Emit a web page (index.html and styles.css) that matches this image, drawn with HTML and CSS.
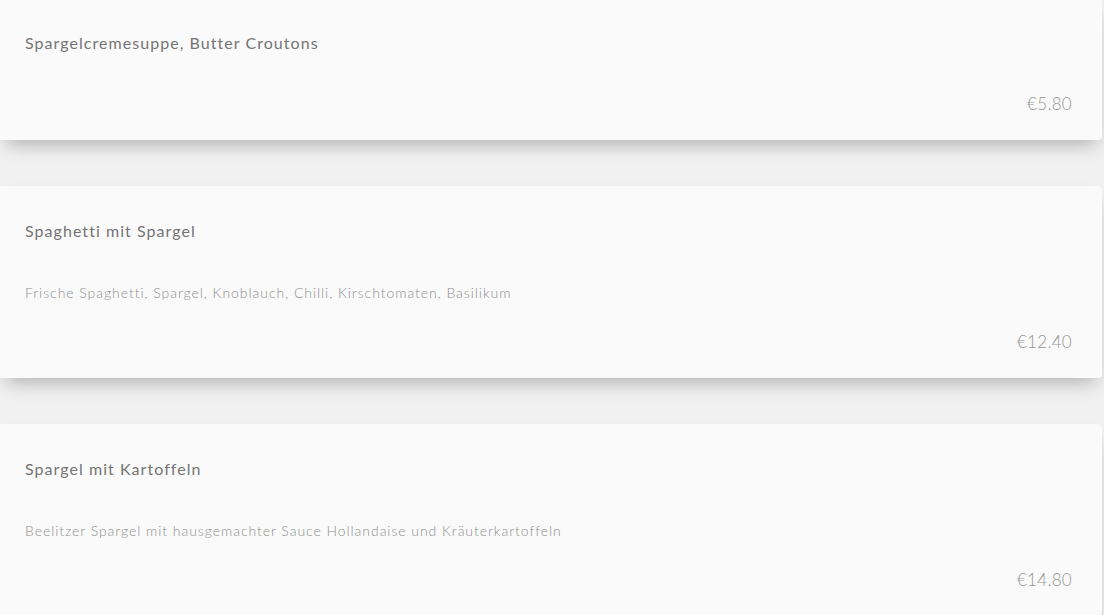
FILE: index.html
```html
<!DOCTYPE html>
<html lang="de">
<head>
    <meta charset="UTF-8">
    <meta name="viewport" content="width=device-width, initial-scale=1.0">
    <title>Speisekarte</title>
    <link rel="stylesheet" href="styles.css">
</head>
<body>

<div class="menu">

    <div class="card">
        <h2 class="dish">Spargelcremesuppe, Butter Croutons</h2>
        <p class="price">€5.80</p>
    </div>

    <div class="card">
        <h2 class="dish">Spaghetti mit Spargel</h2>
        <p class="desc">Frische Spaghetti, Spargel, Knoblauch, Chilli, Kirschtomaten, Basilikum</p>
        <p class="price">€12.40</p>
    </div>

    <div class="card">
        <h2 class="dish">Spargel mit Kartoffeln</h2>
        <p class="desc">Beelitzer Spargel mit hausgemachter Sauce Hollandaise und Kräuterkartoffeln</p>
        <p class="price">€14.80</p>
    </div>

</div>

</body>
</html>
```

FILE: styles.css
```css
body {
    margin: 0;
    background-color: #f1f1f1;
    font-family: Lato, "Open Sans", sans-serif;
    overflow: hidden;
}

.menu {
    display: flex;
    flex-direction: column;
    gap: 46px;
    margin-top: -2px;
    padding-right: 2px;
}

.card {
    background-color: #fafafa;
    border-radius: 0 4px 4px 0;
    padding: 35px 30px 26px 25px;
    box-shadow: 0 10px 18px -6px rgba(0, 0, 0, 0.28);
}

.dish {
    margin: 0;
    font-size: 16px;
    font-weight: 400;
    line-height: 20px;
    letter-spacing: 1.05px;
    color: #747474;
}

.desc {
    margin: 43px 0 0 0;
    font-size: 14px;
    font-weight: 300;
    line-height: 18px;
    letter-spacing: 0.95px;
    color: #8e8e8e;
}

.price {
    margin: 41px 0 0 0;
    text-align: right;
    font-size: 17px;
    font-weight: 300;
    line-height: 20px;
    letter-spacing: 0.3px;
    color: #959595;
}

.desc + .price {
    margin-top: 30px;
}
```
